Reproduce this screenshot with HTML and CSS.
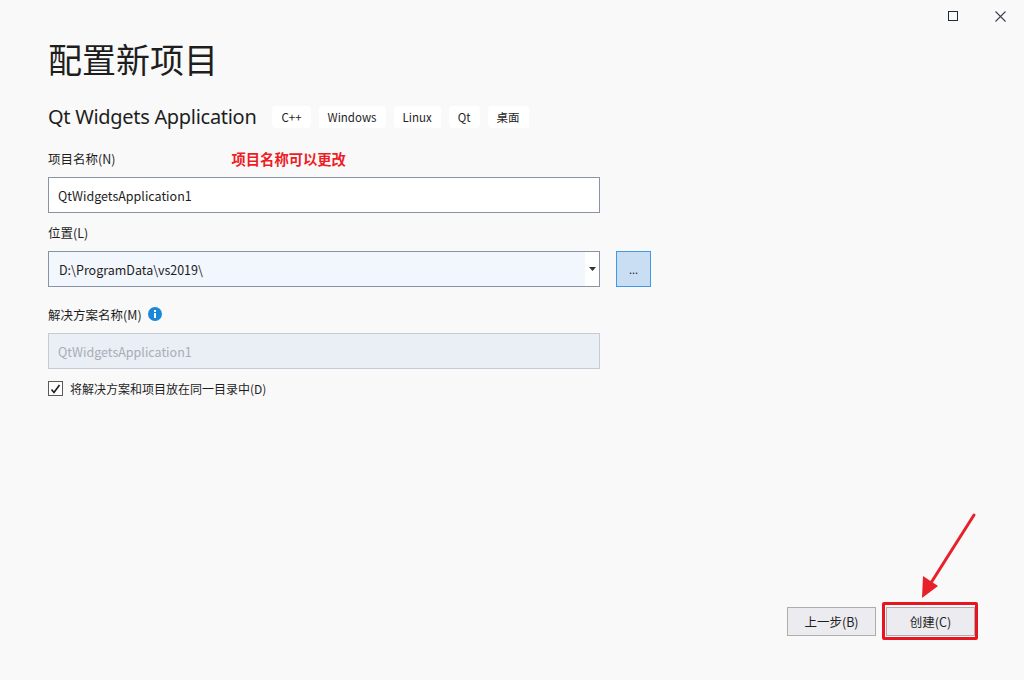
FILE: index.html
```html
<!DOCTYPE html>
<html lang="zh-CN">
<head>
<meta charset="utf-8">
<title>配置新项目</title>
<link rel="stylesheet" href="styles.css">
</head>
<body>
<div class="window">
  <div class="titlebar">
    <span class="ctl ctl-max"><svg width="10" height="10" viewBox="0 0 10 10"><rect x="0.5" y="0.5" width="9" height="9" fill="none" stroke="#1f2a3c" stroke-width="1"/></svg></span>
    <span class="ctl ctl-close"><svg width="11" height="11" viewBox="0 0 11 11"><path d="M0.5 0.5 L10.5 10.5 M10.5 0.5 L0.5 10.5" stroke="#3a4252" stroke-width="1.1"/></svg></span>
  </div>
  <main class="content">
    <h1 class="title">配置新项目</h1>
    <div class="subtitle-row">
      <span class="subtitle">Qt Widgets Application</span>
      <span class="tag">C++</span>
      <span class="tag">Windows</span>
      <span class="tag">Linux</span>
      <span class="tag">Qt</span>
      <span class="tag">桌面</span>
    </div>

    <div class="label-row label-row-first">
      <span class="label">项目名称(N)</span>
      <span class="note">项目名称可以更改</span>
    </div>
    <div class="field-row">
      <div class="input">QtWidgetsApplication1</div>
    </div>

    <div class="label-row label-row-second">
      <span class="label">位置(L)</span>
    </div>
    <div class="field-row">
      <div class="input input-combo">
        <span class="combo-text">D:\ProgramData\vs2019\</span>
        <span class="combo-arrow"><svg width="7" height="4" viewBox="0 0 7 4"><path d="M0 0 H7 L3.5 4 Z" fill="#333"/></svg></span>
      </div>
      <div class="browse">...</div>
    </div>

    <div class="label-row label-row-third">
      <span class="label">解决方案名称(M)</span>
      <span class="info"><svg width="14" height="14" viewBox="0 0 14 14"><circle cx="7" cy="7" r="7" fill="#1b87d8"/><rect x="6" y="6" width="2" height="5" fill="#fff"/><rect x="6" y="3" width="2" height="2" fill="#fff"/></svg></span>
    </div>
    <div class="field-row">
      <div class="input input-disabled">QtWidgetsApplication1</div>
    </div>

    <label class="check-row">
      <span class="checkbox"><svg width="11" height="10" viewBox="0 0 11 10"><path d="M1.5 5.5 L4 8.5 L9.5 1" fill="none" stroke="#1a1a1a" stroke-width="1.6"/></svg></span>
      <span class="check-label">将解决方案和项目放在同一目录中(D)</span>
    </label>
  </main>
  <footer class="footer">
    <button class="btn">上一步(B)</button>
    <div class="highlight"><button class="btn">创建(C)</button></div>
  </footer>
  <svg class="arrow" width="70" height="100" viewBox="0 0 70 100">
    <path d="M62 5 L17 76" stroke="#e8202a" stroke-width="3" stroke-linecap="round" fill="none"/>
    <path d="M10 88 L11 66 L26 76 Z" fill="#e8202a"/>
  </svg>
</div>
</body>
</html>
```
FILE: styles.css
```css
html, body {
  margin: 0;
  padding: 0;
}
body {
  background: #f9f9f9;
  font-family: "Noto Sans CJK SC", "Noto Sans", sans-serif;
  color: #1e1e1e;
}
.window {
  position: relative;
  width: 1024px;
  height: 680px;
  display: flex;
  flex-direction: column;
  overflow: hidden;
}
.titlebar {
  height: 32px;
  display: flex;
  justify-content: flex-end;
  align-items: flex-start;
  padding-top: 11px;
  box-sizing: border-box;
}
.ctl {
  display: flex;
  justify-content: center;
  width: 46px;
}
.ctl-max { margin-right: 1px; }
.ctl-close { margin-right: 1px; }
.content {
  flex: 1;
  padding-left: 48px;
}
.title {
  margin: 4px 0 0 0;
  font-size: 34px;
  font-weight: 400;
  line-height: 46px;
  color: #1e1e1e;
}
.subtitle-row {
  display: flex;
  align-items: center;
  margin-top: 23px;
  height: 24px;
}
.subtitle {
  font-size: 20px;
  font-family: "Noto Sans", "Noto Sans CJK SC", sans-serif;
  letter-spacing: -0.3px;
  margin-right: 16px;
  line-height: 24px;
}
.tag {
  background: #ffffff;
  border-radius: 4px;
  font-size: 11.5px;
  height: 22px;
  line-height: 22px;
  padding: 0 9px;
  margin-right: 8px;
  color: #1e1e1e;
}
.label-row {
  display: flex;
  align-items: center;
  height: 18px;
  margin-bottom: 10px;
}
.label-row-first { margin-top: 20px; }
.label-row-second { margin-top: 10px; }
.label-row-third { margin-top: 18px; }
.label {
  font-size: 12.5px;
  color: #1e1e1e;
}
.note {
  margin-left: 116px;
  color: #ee1c25;
  font-weight: 700;
  font-size: 14.3px;
}
.info {
  display: flex;
  margin-left: 6px;
}
.field-row {
  display: flex;
  align-items: stretch;
}
.input {
  height: 34px;
  border: 1px solid #8a93a3;
  background: #ffffff;
  display: flex;
  align-items: center;
  padding-left: 9px;
  box-sizing: content-box;
  font-size: 12.5px;
  color: #1e1e1e;
  width: 541px;
}
.input-combo {
  background: #f2f6fd;
  padding-left: 0;
  width: 550px;
  justify-content: space-between;
}
.combo-text {
  padding-left: 10px;
}
.combo-arrow {
  background: #ffffff;
  width: 14px;
  height: 34px;
  display: flex;
  align-items: center;
  justify-content: center;
}
.browse {
  margin-left: 16px;
  width: 33px;
  height: 34px;
  border: 1px solid #3d9ae8;
  background: #c9ddf3;
  display: flex;
  align-items: center;
  justify-content: center;
  font-size: 11px;
  color: #1e1e1e;
}
.input-disabled {
  background: #eaeef5;
  border-color: #c6cbd4;
  color: #a9adb5;
}
.check-row {
  display: flex;
  align-items: center;
  margin-top: 11px;
}
.checkbox {
  width: 13px;
  height: 13px;
  border: 1px solid #5a5a5a;
  background: #fff;
  display: flex;
  align-items: center;
  justify-content: center;
}
.check-label {
  margin-left: 7px;
  font-size: 12px;
}
.footer {
  display: flex;
  justify-content: flex-end;
  align-items: center;
  padding-right: 46px;
  padding-bottom: 40px;
}
.btn {
  width: 89px;
  height: 29px;
  border: 1px solid #adadad;
  background: #ececf0;
  font-family: "Noto Sans CJK SC", "Noto Sans", sans-serif;
  font-size: 12.5px;
  color: #1e1e1e;
  padding: 0;
  box-sizing: border-box;
}
.highlight {
  margin-left: 6px;
  border: 3px solid #e8141f;
  border-radius: 2px;
  padding: 2px 0 1px 1px;
}
.arrow {
  position: absolute;
  left: 912px;
  top: 510px;
}
```
